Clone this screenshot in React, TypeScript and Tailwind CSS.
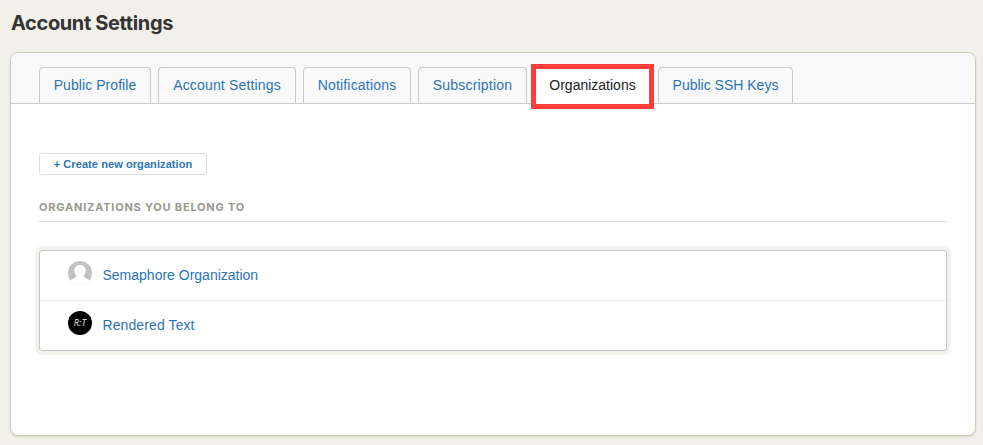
const link = "text-[#2a74b8]";

const tabs = [
  { label: "Public Profile", box: "w-[112px] mr-[7px]", track: "tracking-[0.06px]" },
  { label: "Account Settings", box: "w-[138px] mr-[7px]", track: "tracking-[0.16px]" },
  { label: "Notifications", box: "w-[108px] mr-[7px]", track: "tracking-[0.19px]" },
  { label: "Subscription", box: "w-[109px] mr-[4px]", track: "tracking-[0.2px]" },
  { label: "Organizations", box: "", track: "tracking-[0px]", active: true },
  { label: "Public SSH Keys", box: "w-[135px] ml-[4px]", track: "tracking-[0px]" },
];

function Tab({ label, box, track, active }: { label: string; box: string; track: string; active?: boolean }) {
  if (active) {
    return (
      <div className="-mb-[6px] flex h-[45px] w-[123px] justify-center border-[5px] border-[#ff3d38] bg-white pt-[6px] leading-5 text-[#222]">
        <span className={track}>{label}</span>
      </div>
    );
  }
  return (
    <div className={`flex h-[36px] justify-center rounded-t border border-b-0 border-[#c9c9c9] pt-[7px] leading-5 whitespace-nowrap ${link} ${box}`}>
      <span className={track}>{label}</span>
    </div>
  );
}

function PersonAvatar() {
  return (
    <svg viewBox="0 0 24 24" className="size-6">
      <defs>
        <clipPath id="round">
          <circle cx="12" cy="12" r="12" />
        </clipPath>
      </defs>
      <g clipPath="url(#round)">
        <rect width="24" height="24" fill="#c2c2c2" />
        <path
          d="M12 4C8.400 4 6.300 6.300 6.400 9.500c.1 2 .7 3.700 1.800 4.900.3 1.700-.6 2.300-2.600 3.100C3.400 18.400 2.400 19.300 1.500 21v4h21v-4c-.9-1.700-1.900-2.600-4.100-3.500-2-.8-2.900-1.400-2.600-3.100 1.100-1.200 1.700-2.900 1.800-4.900C17.700 6.300 15.600 4 12 4z"
          fill="#fff"
        />
        <path d="M0 21.500h24V24H0z" fill="#fff" />
      </g>
    </svg>
  );
}

export default function App() {
  return (
    <div className="h-[445px] w-[983px] overflow-hidden bg-[#f1f1e9] pl-[10px] font-['Liberation_Sans',Arial,sans-serif] text-sm">
      <h1 className="h-[52px] pt-[9px] pl-px font-[Inter,sans-serif] text-[20px] leading-7 font-bold tracking-[-0.37px] text-[#333]">
        <span>Account Settings</span>
      </h1>
      <main className="h-[384px] w-[966px] overflow-hidden rounded-lg border border-[#ccccb3] bg-white shadow-[0_1px_2px_rgba(0,0,0,0.12)]">
        <nav className="flex h-[51px] items-end border-b border-[#c9c9c9] bg-[#f9f9f9] pl-7">
          {tabs.map((t) => (
            <Tab key={t.label} {...t} />
          ))}
        </nav>
        <section className="px-7 pt-[49px]">
          <button className={`flex h-[22px] w-[168px] items-center justify-center rounded-[3px] border border-[#dddddd] pt-[2px] text-[11px] font-bold tracking-[0.08px] whitespace-nowrap ${link}`}>
            <span>+ Create new organization</span>
          </button>
          <h2 className="mt-6 h-[23px] border-b border-[#ddd] font-[Inter,sans-serif] text-[11px] leading-4 font-bold tracking-[0.79px] text-[#999990]">
            <span>ORGANIZATIONS YOU BELONG TO</span>
          </h2>
          <ul className="mt-7 rounded-[3px] border border-[#c4c4c4] shadow-[0_0_0_4px_#f3f3ee]">
            <li className="flex h-[50px] border-b border-[#ebebeb] pt-[10px] pl-7">
              <PersonAvatar />
              <a className={`ml-[10.5px] pt-[4px] leading-5 ${link}`}>Semaphore Organization</a>
            </li>
            <li className="flex h-[49px] pt-[10px] pl-7">
              <span className="flex size-6 items-center justify-center rounded-full bg-black font-['Open_Sans',sans-serif] text-[9px] tracking-[0.2px] text-[#eee] italic">
                R:T
              </span>
              <a className={`ml-[10.5px] pt-[4px] leading-5 tracking-[0.1px] ${link}`}>Rendered Text</a>
            </li>
          </ul>
        </section>
      </main>
    </div>
  );
}
